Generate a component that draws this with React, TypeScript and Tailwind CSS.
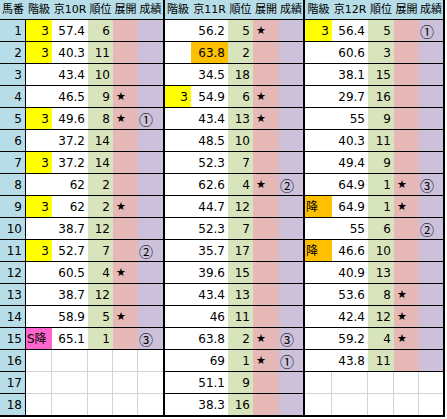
import React from "react";

type R = { g?: string; gb?: "y" | "p" | "o"; v?: string; vb?: "o"; r?: string; s?: boolean; c?: string } | null;

const BG: Record<string, string> = {
  y: "bg-[#ffff00]",
  p: "bg-[#ff66cc]",
  o: "bg-[#ffc000]",
};

const g1: R[] = [
  { g: "3", gb: "y", v: "57.4", r: "6" },
  { g: "3", gb: "y", v: "40.3", r: "11" },
  { v: "43.4", r: "10" },
  { v: "46.5", r: "9", s: true },
  { g: "3", gb: "y", v: "49.6", r: "8", s: true, c: "①" },
  { v: "37.2", r: "14" },
  { g: "3", gb: "y", v: "37.2", r: "14" },
  { v: "62", r: "2" },
  { g: "3", gb: "y", v: "62", r: "2", s: true },
  { v: "38.7", r: "12" },
  { g: "3", gb: "y", v: "52.7", r: "7", c: "②" },
  { v: "60.5", r: "4", s: true },
  { v: "38.7", r: "12" },
  { v: "58.9", r: "5", s: true },
  { g: "S降", gb: "p", v: "65.1", r: "1", c: "③" },
  null,
  null,
  null,
];

const g2: R[] = [
  { v: "56.2", r: "5", s: true },
  { v: "63.8", vb: "o", r: "2" },
  { v: "34.5", r: "18" },
  { g: "3", gb: "y", v: "54.9", r: "6", s: true },
  { v: "43.4", r: "13", s: true },
  { v: "48.5", r: "10" },
  { v: "52.3", r: "7" },
  { v: "62.6", r: "4", s: true, c: "②" },
  { v: "44.7", r: "12" },
  { v: "52.3", r: "7" },
  { v: "35.7", r: "17" },
  { v: "39.6", r: "15" },
  { v: "43.4", r: "13" },
  { v: "46", r: "11" },
  { v: "63.8", r: "2", s: true, c: "③" },
  { v: "69", r: "1", s: true, c: "①" },
  { v: "51.1", r: "9" },
  { v: "38.3", r: "16" },
];

const g3: R[] = [
  { g: "3", gb: "y", v: "56.4", r: "5", c: "①" },
  { v: "60.6", r: "3" },
  { v: "38.1", r: "15" },
  { v: "29.7", r: "16" },
  { v: "55", r: "9" },
  { v: "40.3", r: "11" },
  { v: "49.4", r: "9" },
  { v: "64.9", r: "1", s: true, c: "③" },
  { g: "降", gb: "o", v: "64.9", r: "1", s: true },
  { v: "55", r: "6", c: "②" },
  { g: "降", gb: "o", v: "46.6", r: "10" },
  { v: "40.9", r: "13" },
  { v: "53.6", r: "8", s: true },
  { v: "42.4", r: "12", s: true },
  { v: "59.2", r: "4", s: true },
  { v: "43.8", r: "11" },
  null,
  null,
];

const W1 = ["w-[26px]", "w-[36px]", "w-[25px]", "w-[25px]", "w-[25px]"];
const W2 = ["w-[26px]", "w-[37px]", "w-[25px]", "w-[26px]", "w-[24px]"];
const W3 = ["w-[27px]", "w-[36px]", "w-[26px]", "w-[25px]", "w-[24px]"];

const COLBG = ["bg-white", "bg-white", "bg-[#d8e4bc]", "bg-[#e6b8b7]", "bg-[#ccc0da]"];

function Group({ row, idx, widths, gw }: { row: R; idx: number; widths: string[]; gw: string }) {
  const last = idx === 17;
  if (!row) {
    const bb = last ? "" : "border-b border-[#d4d4d4]";
    return (
      <div className={`flex h-full ${gw} border-r-2 border-black`}>
        {widths.map((w, i) => (
          <div key={i} className={`${w} h-full bg-white ${bb} ${i < 4 ? "border-r border-[#d4d4d4]" : ""}`} />
        ))}
      </div>
    );
  }
  const bb = last ? "" : "border-b border-black";
  const gradeNum = row.g && /^[0-9]+$/.test(row.g);
  return (
    <div className={`flex h-full ${gw} border-r-2 border-black`}>
      <div
        className={`${widths[0]} h-full ${bb} ${row.gb ? BG[row.gb] : COLBG[0]} flex items-center ${
          gradeNum ? "justify-end pr-[3px]" : "justify-start pl-[1px] text-[12px]"
        }`}
      >
        {row.g}
      </div>
      <div className={`${widths[1]} h-full ${bb} ${row.vb ? BG[row.vb] : COLBG[1]} flex items-center justify-end pr-[3px]`}>
        {row.v}
      </div>
      <div className={`${widths[2]} h-full ${bb} ${COLBG[2]} flex items-center justify-end pr-[3px]`}>{row.r}</div>
      <div className={`${widths[3]} h-full ${bb} ${COLBG[3]} flex items-center pl-[3px] text-[11px]`}>
        {row.s ? "★" : ""}
      </div>
      <div
        className={`${widths[4]} h-full ${bb} ${COLBG[4]} flex items-center pl-[1px] text-[14px] font-['Noto_Sans_CJK_JP',sans-serif]`}
      >
        {row.c}
      </div>
    </div>
  );
}

function HeaderGroup({ name, widths, gw }: { name: string; widths: string[]; gw: string }) {
  const labels = ["階級", name, "順位", "展開", "成績"];
  return (
    <div className={`flex h-full ${gw} border-r-2 border-black`}>
      {labels.map((l, i) => (
        <div key={i} className={`${widths[i]} h-full flex items-center justify-center whitespace-nowrap`}>
          {l}
        </div>
      ))}
    </div>
  );
}

export default function App() {
  const rows = Array.from({ length: 18 }, (_, i) => i);
  return (
    <div className="w-[447px] h-[419px] bg-white font-['DejaVu_Sans','Noto_Sans_CJK_JP',sans-serif] text-[12px] text-black leading-none">
      <div className="w-[445px] border-b-2 border-black">
        <div className="flex h-[20px] bg-[#b7dde8] border-b border-black text-[11px]">
          <div className="w-[26px] h-full flex items-center justify-center whitespace-nowrap">馬番</div>
          <HeaderGroup name="京10R" widths={W1} gw="w-[139px]" />
          <HeaderGroup name="京11R" widths={W2} gw="w-[140px]" />
          <HeaderGroup name="京12R" widths={W3} gw="w-[140px]" />
        </div>
        {rows.map((i) => {
          const last = i === 17;
          const col0b = last ? "" : i < 15 ? "border-b border-black" : "border-b border-[#c9d9de]";
          return (
            <div key={i} className={`flex ${last ? "h-[21px]" : "h-[22px]"}`}>
              <div
                className={`w-[26px] h-full bg-[#b7dde8] border-r border-black ${col0b} flex items-center justify-end pr-[3px]`}
              >
                {i + 1}
              </div>
              <Group row={g1[i]} idx={i} widths={W1} gw="w-[139px]" />
              <Group row={g2[i]} idx={i} widths={W2} gw="w-[140px]" />
              <Group row={g3[i]} idx={i} widths={W3} gw="w-[140px]" />
            </div>
          );
        })}
      </div>
    </div>
  );
}
